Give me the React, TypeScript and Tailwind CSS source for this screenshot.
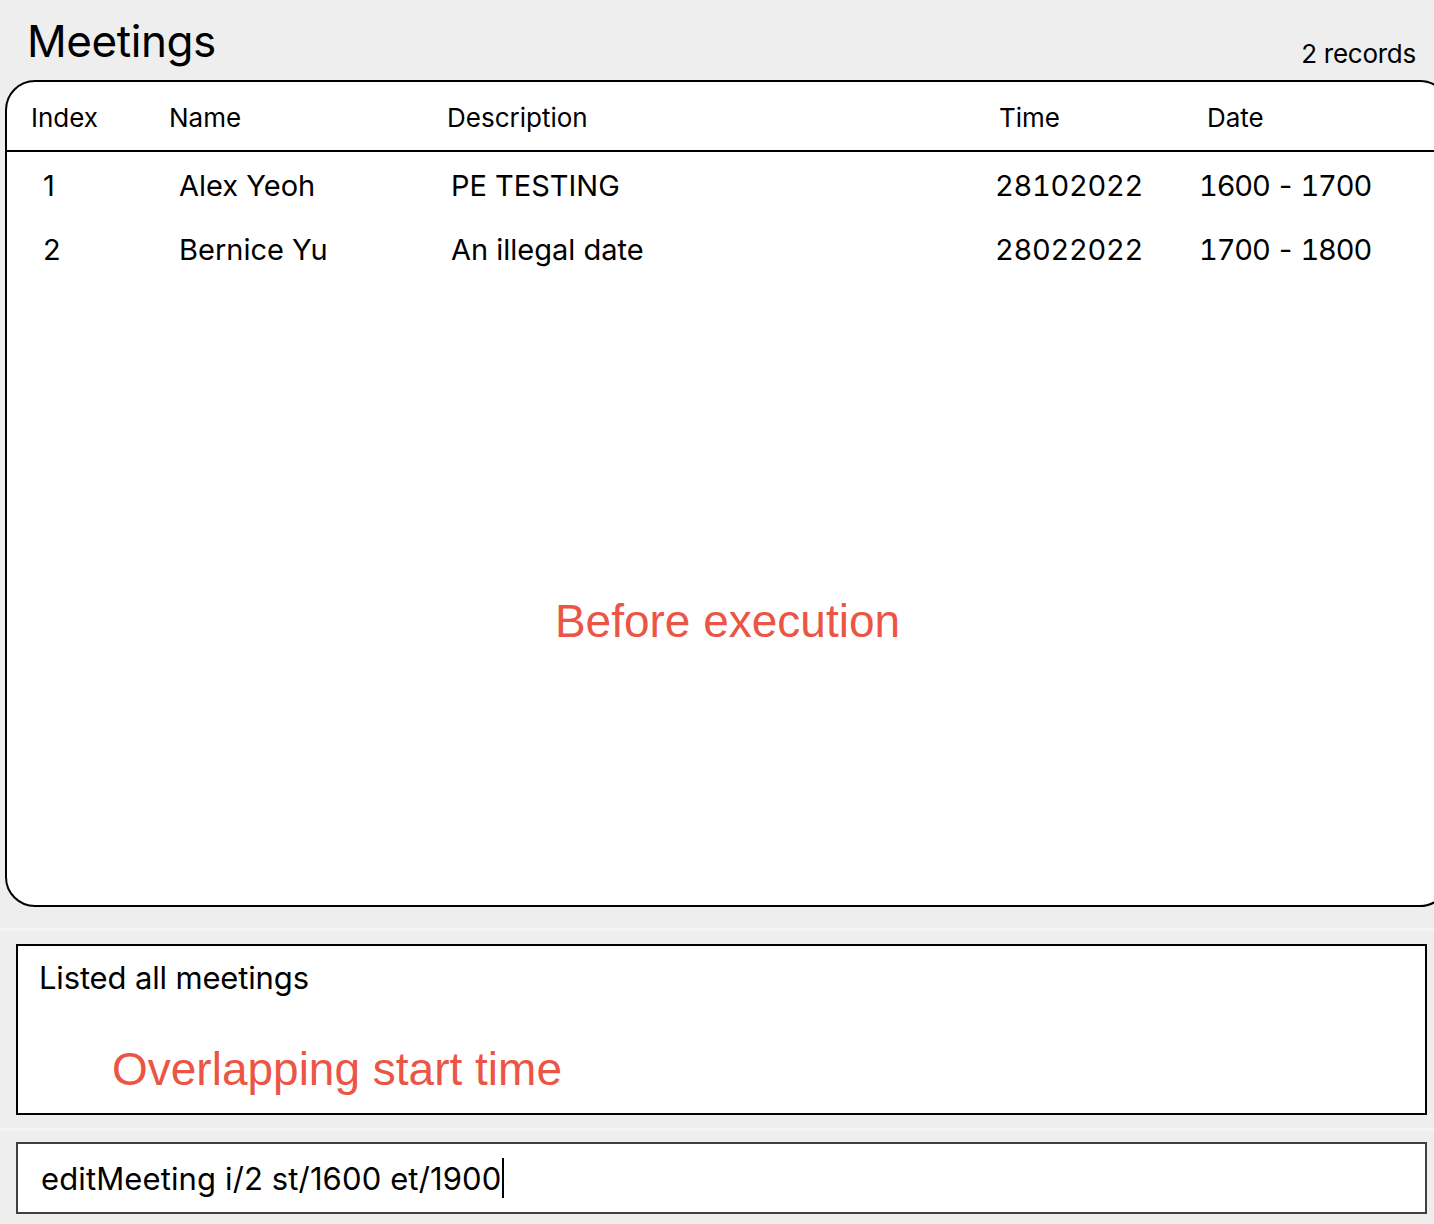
const columns = [
  { label: 'Index', head: 'w-[162px] pl-[24px]', cell: 'w-[162px] pl-[36px]' },
  { label: 'Name', head: 'w-[278px]', cell: 'w-[278px] pl-[10px]' },
  { label: 'Description', head: 'w-[552px]', cell: 'w-[548px] pl-[4px]' },
  { label: 'Time', head: 'w-[208px]', cell: 'w-[204px] tabular-nums tracking-[-0.01em]' },
  { label: 'Date', head: 'w-[200px]', cell: 'w-[220px] tabular-nums tracking-[-0.04em]' },
]

const meetings = [
  ['1', 'Alex Yeoh', 'PE TESTING', '28102022', '1600 - 1700'],
  ['2', 'Bernice Yu', 'An illegal date', '28022022', '1700 - 1800'],
]

export default function App() {
  return (
    <div
      className="w-full h-[1224px] overflow-hidden bg-[#eeeeee] text-black"
      style={{ fontFamily: 'Inter, "Noto Sans", sans-serif' }}
    >
      {/* Title bar */}
      <div className="flex items-end justify-between h-[80px] pl-[27px] pr-[18px] pb-[13px]">
        <h1 className="text-[44px] leading-none tracking-[-0.01em] pb-[4px]">Meetings</h1>
        <span className="text-[26px] leading-none tracking-[-0.01em]">2 records</span>
      </div>

      {/* Meeting table */}
      <div className="ml-[5px] w-[1445px] h-[827px] bg-white border-2 border-black rounded-[30px] overflow-hidden">
        <div className="flex h-[70px] items-center border-b-2 border-black text-[26px] pt-[2px]">
          {columns.map((c) => (
            <div key={c.label} className={c.head}>
              {c.label}
            </div>
          ))}
        </div>
        <div className="pt-[2px]">
          {meetings.map((m) => (
            <div key={m[0]} className="flex h-[64px] items-center text-[29px]">
              {m.map((v, i) => (
                <div key={i} className={columns[i].cell}>
                  {v}
                </div>
              ))}
            </div>
          ))}
        </div>
        <div
          className="flex justify-center pt-[305px] text-[46px] text-[#ec5546]"
          style={{ fontFamily: '"Liberation Sans", Arial, sans-serif' }}
        >
          Before execution
        </div>
      </div>

      <div className="h-[21px]" />
      <div className="h-[3px] bg-[#f4f4f4]" />

      {/* Result display */}
      <div className="pt-[13px] pl-[16px] pr-[7px]">
        <div className="h-[171px] bg-white border-2 border-black pl-[21px] pt-[12px]">
          <div className="text-[31px] leading-[40px] tracking-[-0.005em]">Listed all meetings</div>
          <div
            className="mt-[48px] pl-[73px] text-[46px] leading-none text-[#ec5546]"
            style={{ fontFamily: '"Liberation Sans", Arial, sans-serif' }}
          >
            Overlapping start time
          </div>
        </div>
      </div>

      <div className="h-[13px]" />
      <div className="h-[3px] bg-[#f4f4f4]" />

      {/* Command box */}
      <div className="pt-[11px] pl-[16px] pr-[7px]">
        <div className="h-[72px] bg-white border-2 border-[#3f3f3f] pl-[23px] flex items-center">
          <span className="text-[31px] leading-none tracking-[0.004em]">editMeeting i/2 st/1600 et/1900</span>
          <span className="ml-[1px] w-[2px] h-[40px] bg-black" />
        </div>
      </div>
    </div>
  )
}
